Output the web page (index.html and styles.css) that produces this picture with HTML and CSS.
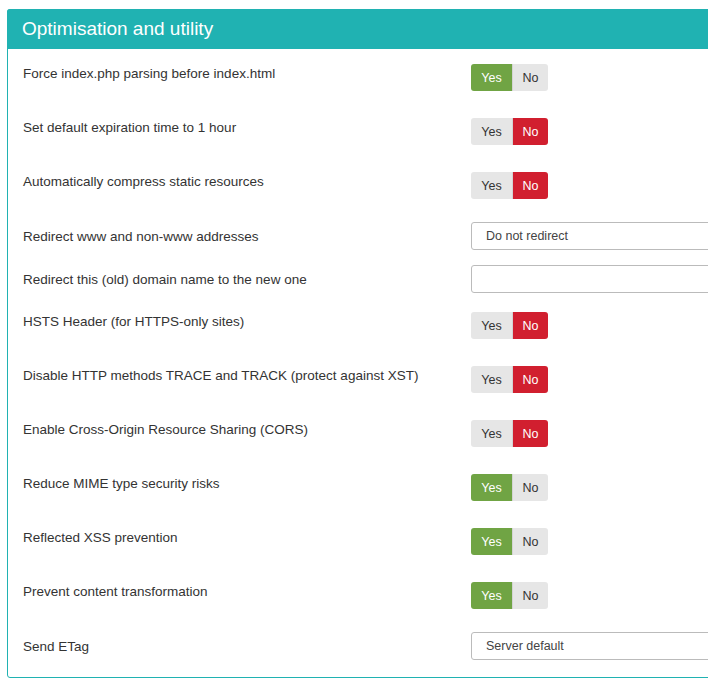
FILE: index.html
```html
<!DOCTYPE html>
<html>
<head>
<meta charset="utf-8">
<link rel="stylesheet" href="styles.css">
</head>
<body>
<div class="panel">
  <div class="panel-head">Optimisation and utility</div>
  <div class="panel-body">
    <div class="row toggle-row">
      <label class="lbl">Force index.php parsing before index.html</label>
      <div class="toggle"><span class="opt yes on">Yes</span><span class="opt no">No</span></div>
    </div>
    <div class="row toggle-row">
      <label class="lbl">Set default expiration time to 1 hour</label>
      <div class="toggle"><span class="opt yes">Yes</span><span class="opt no on">No</span></div>
    </div>
    <div class="row toggle-row">
      <label class="lbl">Automatically compress static resources</label>
      <div class="toggle"><span class="opt yes">Yes</span><span class="opt no on">No</span></div>
    </div>
    <div class="row field-row">
      <label class="lbl">Redirect www and non-www addresses</label>
      <div class="field">Do not redirect</div>
    </div>
    <div class="row field-row">
      <label class="lbl">Redirect this (old) domain name to the new one</label>
      <div class="field"></div>
    </div>
    <div class="row toggle-row">
      <label class="lbl">HSTS Header (for HTTPS-only sites)</label>
      <div class="toggle"><span class="opt yes">Yes</span><span class="opt no on">No</span></div>
    </div>
    <div class="row toggle-row">
      <label class="lbl">Disable HTTP methods TRACE and TRACK (protect against XST)</label>
      <div class="toggle"><span class="opt yes">Yes</span><span class="opt no on">No</span></div>
    </div>
    <div class="row toggle-row">
      <label class="lbl">Enable Cross-Origin Resource Sharing (CORS)</label>
      <div class="toggle"><span class="opt yes">Yes</span><span class="opt no on">No</span></div>
    </div>
    <div class="row toggle-row">
      <label class="lbl">Reduce MIME type security risks</label>
      <div class="toggle"><span class="opt yes on">Yes</span><span class="opt no">No</span></div>
    </div>
    <div class="row toggle-row">
      <label class="lbl">Reflected XSS prevention</label>
      <div class="toggle"><span class="opt yes on">Yes</span><span class="opt no">No</span></div>
    </div>
    <div class="row toggle-row">
      <label class="lbl">Prevent content transformation</label>
      <div class="toggle"><span class="opt yes on">Yes</span><span class="opt no">No</span></div>
    </div>
    <div class="row field-row last">
      <label class="lbl">Send ETag</label>
      <div class="field">Server default</div>
    </div>
  </div>
</div>
</body>
</html>
```
FILE: styles.css
```css
html, body {
  margin: 0;
  padding: 0;
  background: #ffffff;
}
body {
  padding: 9px 0 0 7px;
  font-family: "Liberation Sans", Arial, sans-serif;
  color: #333333;
  overflow: hidden;
}
.panel {
  width: 740px;
  border: 1px solid #20b2b2;
  border-radius: 3px;
  box-sizing: border-box;
}
.panel-head {
  background: #20b2b2;
  color: #ffffff;
  font-size: 19px;
  height: 40px;
  line-height: 40px;
  padding-left: 15px;
  margin: -1px -1px 0 -1px;
  border-radius: 3px 3px 0 0;
}
.panel-body {
  padding: 11px 0 2px 15px;
}
.row {
  display: flex;
  align-items: flex-start;
  margin-bottom: 15px;
}
.field-row + .toggle-row {
  margin-top: 1px;
}
.row.last {
  margin-top: 1px;
}
.lbl {
  width: 448px;
  flex: none;
  font-size: 13.5px;
  line-height: 18px;
  padding-top: 5px;
  color: #333333;
}
.toggle-row {
  height: 39px;
}
.field-row .lbl {
  padding-top: 6px;
}
.toggle {
  display: flex;
  margin-top: 4px;
  height: 27px;
  border-radius: 3px;
  overflow: hidden;
}
.opt {
  display: flex;
  align-items: center;
  justify-content: center;
  font-size: 12.5px;
  background: #e6e6e6;
  color: #333333;
}
.opt.yes {
  width: 41px;
  border-right: 1px solid #d4d4d4;
}
.opt.no {
  width: 35px;
}
.opt.yes.on {
  background: #70a444;
  color: #ffffff;
}
.opt.no.on {
  background: #d11f2f;
  color: #ffffff;
}
.field {
  box-sizing: border-box;
  width: 260px;
  height: 28px;
  border: 1px solid #bbbbbb;
  border-radius: 3px;
  font-size: 12.5px;
  line-height: 26px;
  padding-left: 14px;
  color: #444444;
}
```
